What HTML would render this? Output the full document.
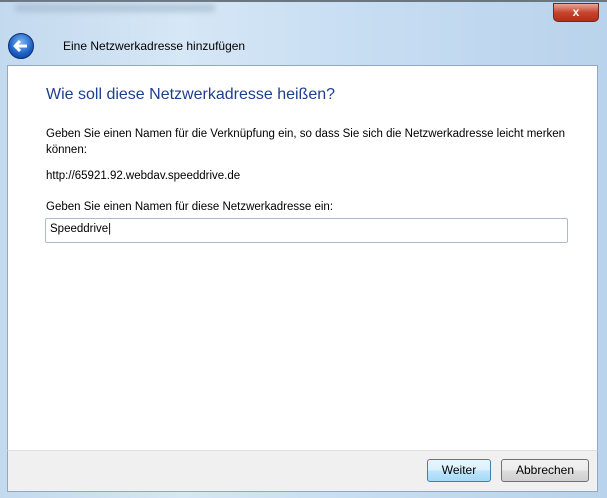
<!DOCTYPE html>
<html><head><style>
body{margin:0;width:607px;height:498px;overflow:hidden;font-family:"Liberation Sans",sans-serif;font-size:11.5px;color:#000;}
.frame{position:absolute;left:0;top:0;width:607px;height:498px;background:linear-gradient(90deg,#c3d9ee 0%,#d6e7f6 30%,#c7ddf2 60%,#b9d3ec 100%);}
.topbar{position:absolute;left:0;top:0;width:607px;height:2px;background:#6b7580;}
.blur{position:absolute;left:15px;top:4px;width:200px;height:8px;background:#9fb4c8;filter:blur(3px);opacity:.6;}
.close{position:absolute;left:553px;top:3px;width:46px;height:19px;border-radius:0 0 5px 5px;background:linear-gradient(#e9a595,#c7452f 50%,#b12f1a);border:1px solid #6b2b20;box-sizing:border-box;color:#fff;font-weight:bold;font-size:12px;text-align:center;line-height:17px;}
.back{position:absolute;left:8px;top:33px;width:26px;height:26px;border-radius:50%;background:radial-gradient(circle at 50% 35%,#7fb6f0,#1a5fc4 60%,#0c3a8a);border:1px solid #0b3173;box-sizing:border-box;}
.title{position:absolute;left:63px;top:39px;font-size:12px;}
.content{position:absolute;left:7px;top:65px;width:591px;height:385px;background:#fff;border:1px solid #8fa9c4;border-bottom:none;box-sizing:border-box;}
.footer{position:absolute;left:7px;top:450px;width:591px;height:42px;background:#f0f0f0;border:1px solid #8fa9c4;border-top:1px solid #dfdfdf;box-sizing:border-box;}
.h{position:absolute;left:46px;top:86px;font-size:16px;color:#1e3f8f;}
.t{position:absolute;left:46px;}
.input{position:absolute;left:45px;top:218px;width:523px;height:25px;border:1px solid #abbccf;box-sizing:border-box;border-radius:2px;padding:4px 4px;font-size:11.5px;}
.btn{position:absolute;top:459px;height:23px;box-sizing:border-box;border:1px solid #707070;border-radius:3px;background:linear-gradient(#f2f2f2,#ebebeb 50%,#dddddd 51%,#cfcfcf);text-align:center;line-height:21px;font-size:12px;}
</style></head><body>
<div class="frame"></div>
<div class="topbar"></div>
<div class="blur"></div>
<div class="close">x</div>
<div class="back"><svg width="24" height="24" viewBox="0 0 24 24"><path d="M18 12H7M11 7l-5 5 5 5" stroke="#fff" stroke-width="3" fill="none" stroke-linejoin="round"/></svg></div>
<div class="title">Eine Netzwerkadresse hinzufügen</div>
<div class="content"></div>
<div class="footer"></div>
<div class="h">Wie soll diese Netzwerkadresse heißen?</div>
<div class="t" style="top:126px;line-height:16px;width:520px">Geben Sie einen Namen für die Verknüpfung ein, so dass Sie sich die Netzwerkadresse leicht merken können:</div>
<div class="t" style="top:170px">http://65921.92.webdav.speeddrive.de</div>
<div class="t" style="top:201px">Geben Sie einen Namen für diese Netzwerkadresse ein:</div>
<div class="input">Speeddrive|</div>
<div class="btn" style="left:427px;width:64px;border-color:#3c7fb1;background:linear-gradient(#eaf6fd,#d9f0fc 50%,#bee6fd 51%,#a7d9f5)">Weiter</div>
<div class="btn" style="left:501px;width:88px">Abbrechen</div>
</body></html>
